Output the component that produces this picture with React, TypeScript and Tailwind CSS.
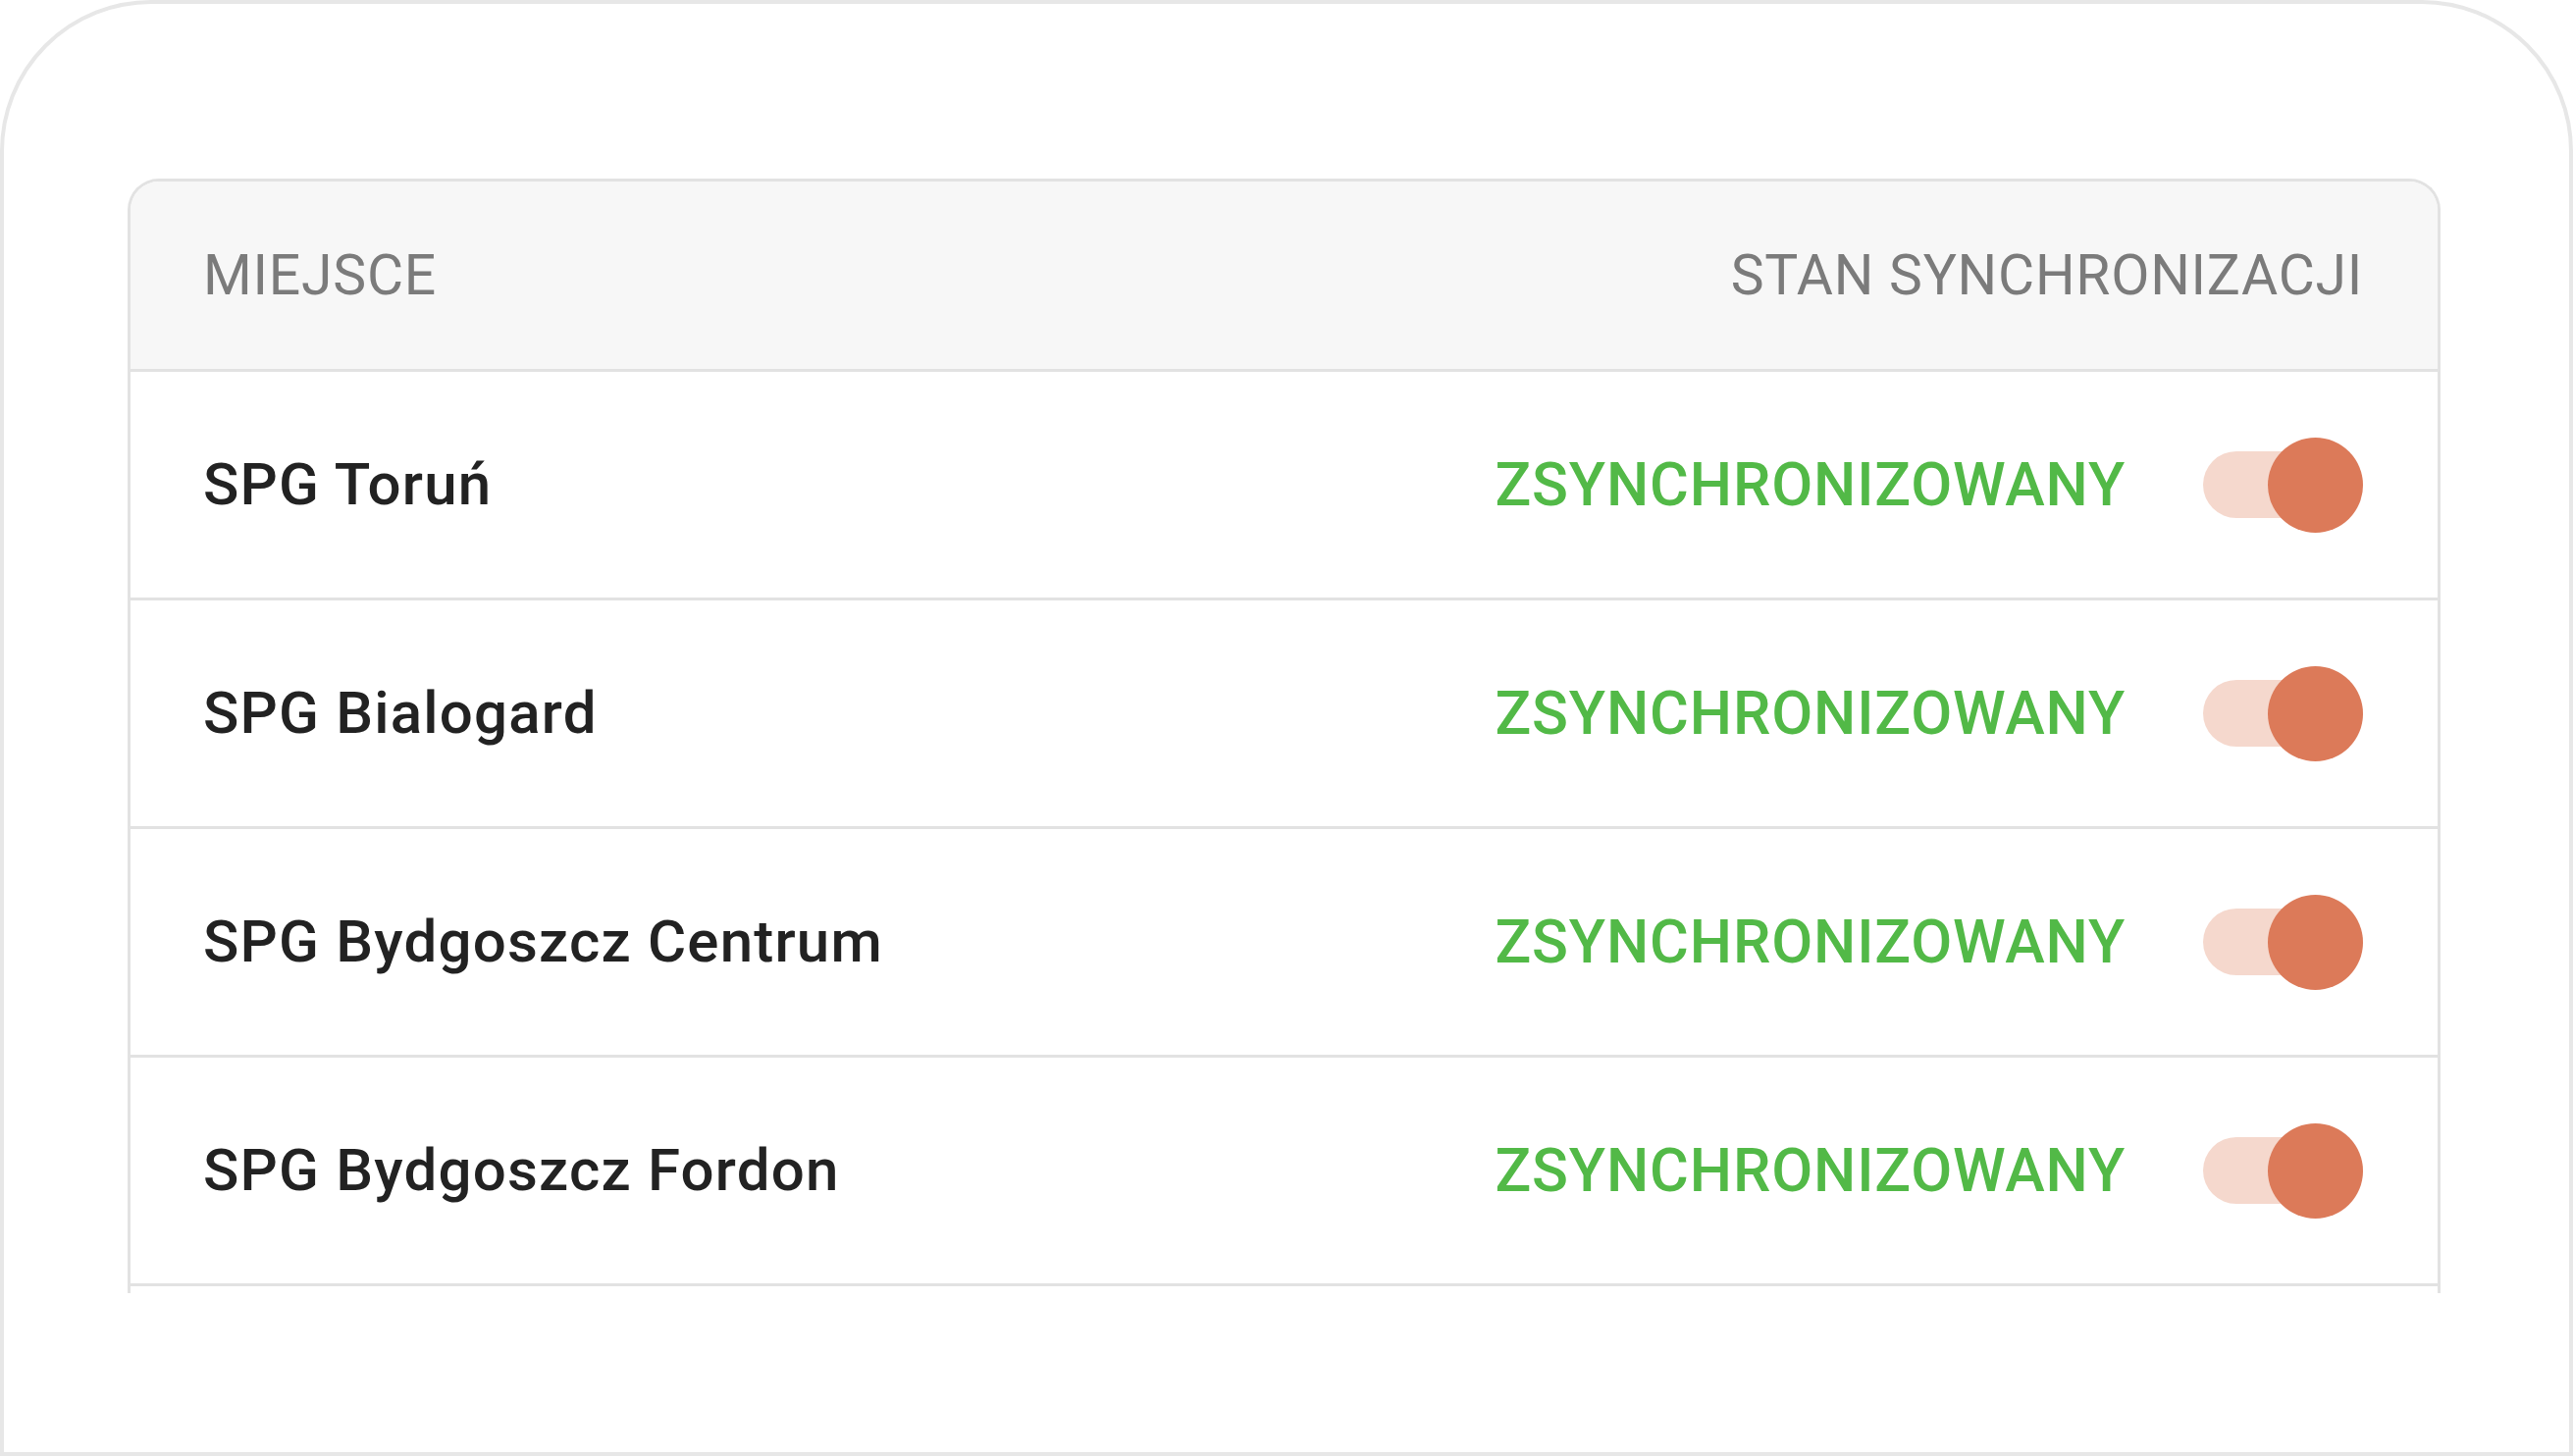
import React from "react";

const places = [
  "SPG Toruń",
  "SPG Bialogard",
  "SPG Bydgoszcz Centrum",
  "SPG Bydgoszcz Fordon",
];

function Toggle() {
  return (
    <div className="relative flex h-[97px] w-[163px] items-center">
      <div className="h-[68px] w-full rounded-full bg-[#f5d8cd]" />
      <div className="absolute right-0 top-0 h-[97px] w-[97px] rounded-full bg-[#dc7a59]" />
    </div>
  );
}

export default function App() {
  return (
    <div
      className="h-[1484px] w-[2622px] overflow-hidden bg-white"
      style={{ fontFamily: "Roboto, 'Liberation Sans', sans-serif" }}
    >
      <div className="box-border h-full w-full rounded-t-[154px] border-[4px] border-[#e7e7e7] bg-white pl-[126px] pr-[131px] pt-[178px]">
        <div className="rounded-t-[32px] border-x-[3px] border-t-[3px] border-[#e2e2e2] pb-[7px]">
          {/* header */}
          <div className="flex h-[194px] items-center justify-between rounded-t-[29px] border-b-[3px] border-[#e2e2e2] bg-[#f7f7f7] pl-[74px] pr-[76px]">
            <span className="text-[57px] leading-none tracking-[0.8px] text-[#7b7b7b]">MIEJSCE</span>
            <span className="text-[57px] leading-none tracking-[0.75px] text-[#7b7b7b]">
              STAN SYNCHRONIZACJI
            </span>
          </div>
          {/* rows */}
          {places.map((name) => (
            <div
              key={name}
              className="flex h-[233px] items-center justify-between border-b-[3px] border-[#e2e2e2] pl-[74px] pr-[76px]"
            >
              <span className="text-[60px] font-medium leading-none tracking-[1.2px] text-[#222222]">
                {name}
              </span>
              <div className="flex items-center gap-[79px]">
                <span className="text-[61px] font-medium leading-none tracking-[0.85px] text-[#52b947]">
                  ZSYNCHRONIZOWANY
                </span>
                <Toggle />
              </div>
            </div>
          ))}
        </div>
      </div>
    </div>
  );
}
